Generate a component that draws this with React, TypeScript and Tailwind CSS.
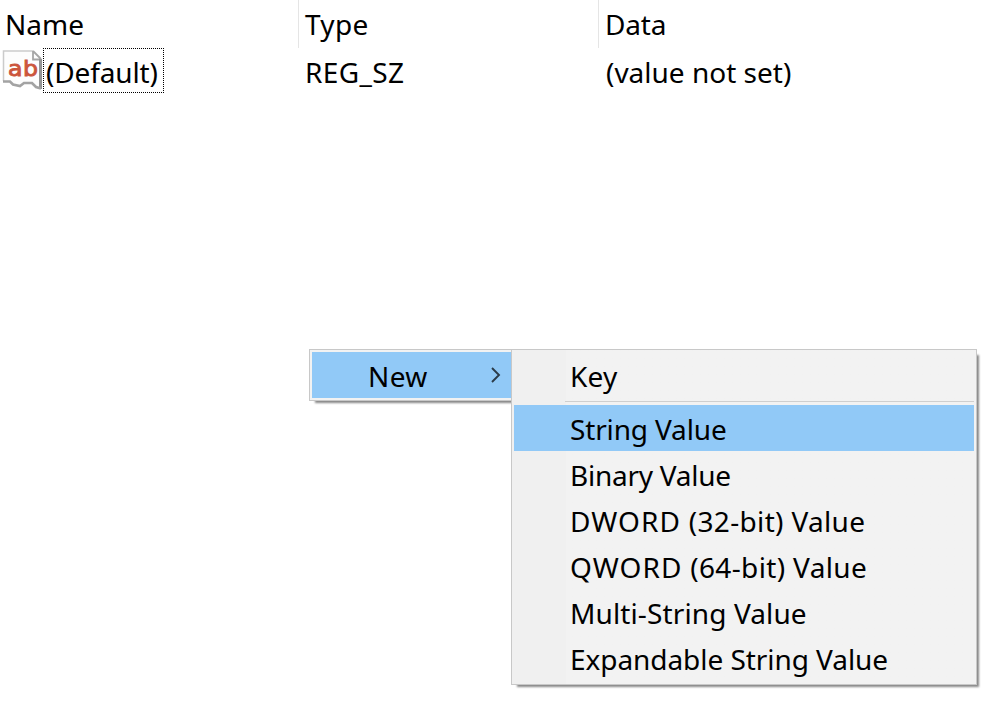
type Item = { label: string; tracking: string; prefix?: string; selected?: boolean };

const items: Item[] = [
  { label: 'String Value', tracking: 'tracking-[-0.15px]', selected: true },
  { label: 'Binary Value', tracking: 'tracking-[-0.25px]' },
  { prefix: 'DWORD', label: ' (32-bit) Value', tracking: 'tracking-[0.33px]' },
  { prefix: 'QWORD', label: ' (64-bit) Value', tracking: 'tracking-[0.35px]' },
  { label: 'Multi-String Value', tracking: 'tracking-[0.12px]' },
  { label: 'Expandable String Value', tracking: 'tracking-[-0.06px]' },
];

function StringIcon() {
  return (
    <svg className="h-[42px] w-[42px] shrink-0" viewBox="0 0 42 42">
      <path d="M3.500 2.500H33L41 11V40L36 38L33 34H25L20 36H14L11 33H3Z" fill="#fdfdfd" />
      <path d="M3.500 33V3H33" fill="none" stroke="#cbcbcb" strokeWidth="1.500" />
      <path d="M33 3V11.500H41M33 3L41 11" fill="none" stroke="#a6a6a6" strokeWidth="1.800" />
      <path d="M40.500 11V41" fill="none" stroke="#959595" strokeWidth="3" />
      <path d="M3 33.500H10L13 36.500L20 38L24 35H32L36 39L41 40.500" fill="none" stroke="#a3a3a3" strokeWidth="2.600" />
      <g fontFamily="DejaVu Sans, sans-serif" fontSize="22" fill="#cc553c" stroke="#cc553c" strokeWidth="0.900">
        <text x="8" y="27.500" textLength="14.500" lengthAdjust="spacingAndGlyphs">a</text>
        <text x="23" y="27.500" textLength="15" lengthAdjust="spacingAndGlyphs">b</text>
      </g>
    </svg>
  );
}

function MenuRow({ label, tracking, prefix, selected }: Item) {
  return (
    <div className={`flex h-[46px] items-center pl-14 ${selected ? 'bg-[#91c9f7]' : ''}`}>
      <span className={`pt-[2px] ${tracking}`}>
        {prefix && <span className="tracking-[1.1px]">{prefix}</span>}
        {label}
      </span>
    </div>
  );
}

export default function App() {
  return (
    <div className="relative h-[702px] w-[994px] overflow-hidden bg-white font-['Noto_Sans',sans-serif] text-[28px] leading-[38px] whitespace-nowrap text-black">
      <div className="grid h-12 grid-cols-[299px_300px_1fr]">
        <div className="border-r border-[#e5e5e5] pt-[5px] pl-[5px]"><span>Name</span></div>
        <div className="border-r border-[#e5e5e5] pt-[5px] pl-[6px]"><span className="tracking-[0.3px]">Type</span></div>
        <div className="pt-[5px] pl-[6px]"><span className="tracking-[-0.2px]">Data</span></div>
      </div>
      <div className="grid h-[46px] grid-cols-[299px_300px_1fr]">
        <div className="flex">
          <StringIcon />
          <div className="ml-px h-[45px] w-[121px] border border-dotted border-black pt-[4px] pl-[2px]"><span className="tracking-[-0.15px]">(Default)</span></div>
        </div>
        <div className="pt-[5px] pl-[6px]"><span className="tracking-[0.35px]">REG_SZ</span></div>
        <div className="pt-[5px] pl-[7px]"><span>(value not set)</span></div>
      </div>

      <div className="absolute top-[349px] left-[309px] h-[52px] w-[210px] border border-[#c8c8c8] bg-[#f2f2f2] p-[2px] shadow-[4px_4px_2px_-2px_#888]">
        <div className="flex h-[46px] items-center bg-[#91c9f7] pl-14">
          <span className="pt-[2px] tracking-[0.4px]">New</span>
          <svg className="ml-[62px] h-4 w-3" viewBox="0 0 12 16" fill="none" stroke="#2b3b49" strokeWidth="1.900">
            <path d="M2 1L9 8L2 15" />
          </svg>
        </div>
      </div>

      <div className="absolute top-[349px] left-[511px] h-[336px] w-[466px] border border-[#c8c8c8] bg-linear-to-r from-[#f0f0f0] from-[54px] to-[#f2f2f2] to-[54px] p-[2px] shadow-[4px_4px_2px_-2px_#888]">
        <MenuRow label="Key" tracking="tracking-[0.2px]" />
        <div className="flex h-[7px] items-center pl-[51px]">
          <div className="h-px w-full bg-[#cfcfcf]" />
        </div>
        {items.map((item) => <MenuRow key={item.prefix ?? item.label} {...item} />)}
      </div>
    </div>
  );
}
